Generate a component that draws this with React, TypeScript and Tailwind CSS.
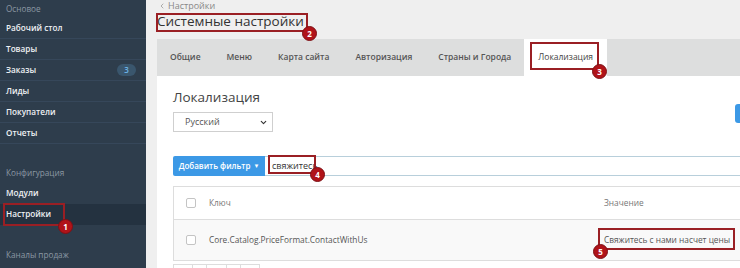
import { ChevronLeft, ChevronDown } from 'lucide-react'

const MAIN_NAV = [
  { label: 'Рабочий стол' },
  { label: 'Товары' },
  { label: 'Заказы', badge: '3' },
  { label: 'Лиды' },
  { label: 'Покупатели' },
  { label: 'Отчеты' },
]

const TABS = ['Общие', 'Меню', 'Карта сайта', 'Авторизация', 'Страны и Города', 'Локализация']

// red markers drawn over the screenshot
const MARKS = [
  { n: '1', box: 'left-[3px] top-[203px] w-[62px] h-[23px]', dot: 'left-[58px] top-[219px]' },
  { n: '2', box: 'left-[156px] top-[13px] w-[152px] h-[19px]', dot: 'left-[302px] top-[26px]' },
  { n: '3', box: 'left-[530px] top-[42px] w-[69px] h-[28px]', dot: 'left-[592px] top-[64px]' },
  { n: '4', box: 'left-[268px] top-[155px] w-[48px] h-[19px]', dot: 'left-[310px] top-[167px]' },
  { n: '5', box: 'left-[598px] top-[228px] w-[137px] h-[22px]', dot: 'left-[593px] top-[244px]' },
]

export default function App() {
  return (
    <div className="relative flex h-[268px] w-[740px] overflow-hidden bg-[#efefef] font-['Open_Sans',sans-serif]">
      <Sidebar />

      <main className="min-w-0 flex-1 pl-[11px]">
        {/* breadcrumb */}
        <div className="flex h-[12px] items-center gap-[2px] pl-[1px] text-[9px] leading-[12px] text-[#888]">
          <ChevronLeft size={8} strokeWidth={2} />
          <span>Настройки</span>
        </div>
        <h1 className="mb-[9px] h-[18px] text-[13.5px] leading-[18px] text-[#333]">Системные настройки</h1>

        {/* tabs */}
        <div className="flex h-[37px] w-[620px] bg-[#dddede]">
          {TABS.map((t) => {
            const active = t === 'Локализация'
            return (
              <div
                key={t}
                className={
                  active
                    ? 'flex items-center bg-white px-[14px] text-[8.5px] text-[#444]'
                    : 'flex items-center px-[13px] text-[8.5px] font-semibold text-[#555]'
                }
              >
                {t}
              </div>
            )
          })}
        </div>

        {/* panel */}
        <div className="h-[200px] w-[620px] bg-white pl-[16px] pt-[9px]">
          <div className="flex items-start">
            <div className="w-[100px]">
              <h2 className="h-[24px] whitespace-nowrap text-[13.5px] leading-[24px] text-[#444]">Локализация</h2>
              <div className="mt-[3px] flex h-[20px] items-center justify-between border border-[#cfcfcf] pl-[11px] pr-[4px] text-[9px] text-[#555]">
                <span>Русский</span>
                <ChevronDown size={9} strokeWidth={3} className="text-[#333]" />
              </div>
            </div>
            <div className="ml-[462px] mt-[19px] h-[19px] w-[40px] rounded-[3px] bg-[#3c99e6]" />
          </div>

          {/* filter */}
          <div className="mt-[24px] flex h-[20px]">
            <button className="flex h-[20px] w-[92px] items-center justify-center gap-[3px] rounded-l-[2px] bg-[#3c99e6] text-[8px] font-semibold text-white">
              Добавить фильтр
              <span className="text-[6px]">▼</span>
            </button>
            <div className="flex flex-1 items-center border-y border-r border-[#b8cfdb] pl-[7px] text-[9px] text-[#333]">
              свяжитесь
            </div>
          </div>

          {/* table */}
          <div className="mt-[10px] border border-[#dddddd] text-[8.3px] text-[#666]">
            <div className="flex h-[33px] items-center border-b border-[#dddddd]">
              <Checkbox />
              <span className="w-[408px] pl-[13px] text-[#777]">Ключ</span>
              <span className="text-[#777]">Значение</span>
            </div>
            <div className="flex h-[40px] items-center bg-[#f9f9f9]">
              <Checkbox />
              <span className="w-[408px] pl-[13px] text-[#555]">Core.Catalog.PriceFormat.ContactWithUs</span>
              <span className="whitespace-nowrap text-[#555]">Свяжитесь с нами насчет цены</span>
            </div>
          </div>

          {/* pagination */}
          <div className="mt-[3px] flex h-[14px] w-[87px] border border-[#dddddd]">
            {[19, 15, 20, 15, 18].map((w, i) => (
              <div key={i} style={{ width: w }} className="border-r border-[#dddddd] last:border-r-0" />
            ))}
          </div>
        </div>
      </main>

      {MARKS.map((m) => (
        <div key={m.n}>
          <div className={`absolute ${m.box} border-2 border-[#9a1f24]`} />
          <div
            className={`absolute ${m.dot} flex h-[15px] w-[15px] items-center justify-center rounded-full border border-[#7d1015] bg-[#b01319] text-[8px] font-bold leading-none text-white`}
          >
            {m.n}
          </div>
        </div>
      ))}
    </div>
  )
}

function Sidebar() {
  return (
    <aside className="h-full w-[146px] shrink-0 bg-[#2e3d4c] text-[8.2px]">
      <div className="flex h-[18px] items-center pl-[6px] text-[#8c98a3]">Основое</div>
      {MAIN_NAV.map((item) => (
        <div
          key={item.label}
          className="flex h-[21px] items-center justify-between border-b border-[#36475a] pl-[6px] pr-[10px] font-semibold text-[#eef1f4] last:border-b-0"
        >
          <span>{item.label}</span>
          {item.badge && (
            <span className="flex h-[12px] w-[19px] items-center justify-center rounded-full bg-[#3a566d] text-[8px] font-semibold text-[#6cb4e6]">
              {item.badge}
            </span>
          )}
        </div>
      ))}
      <div className="flex h-[39px] items-end pb-[4px] pl-[6px] text-[#8c98a3]">Конфигурация</div>
      <div className="flex h-[21px] items-center pl-[6px] font-semibold text-[#eef1f4]">Модули</div>
      <div className="flex h-[21px] items-center bg-[#243240] pl-[6px] font-semibold text-[#eef1f4]">Настройки</div>
      <div className="flex h-[41px] items-end pb-[5px] pl-[6px] text-[#8c98a3]">Каналы продаж</div>
    </aside>
  )
}

function Checkbox() {
  return <div className="ml-[12px] h-[10px] w-[10px] shrink-0 rounded-[2px] border border-[#c4c4c4] bg-white" />
}
